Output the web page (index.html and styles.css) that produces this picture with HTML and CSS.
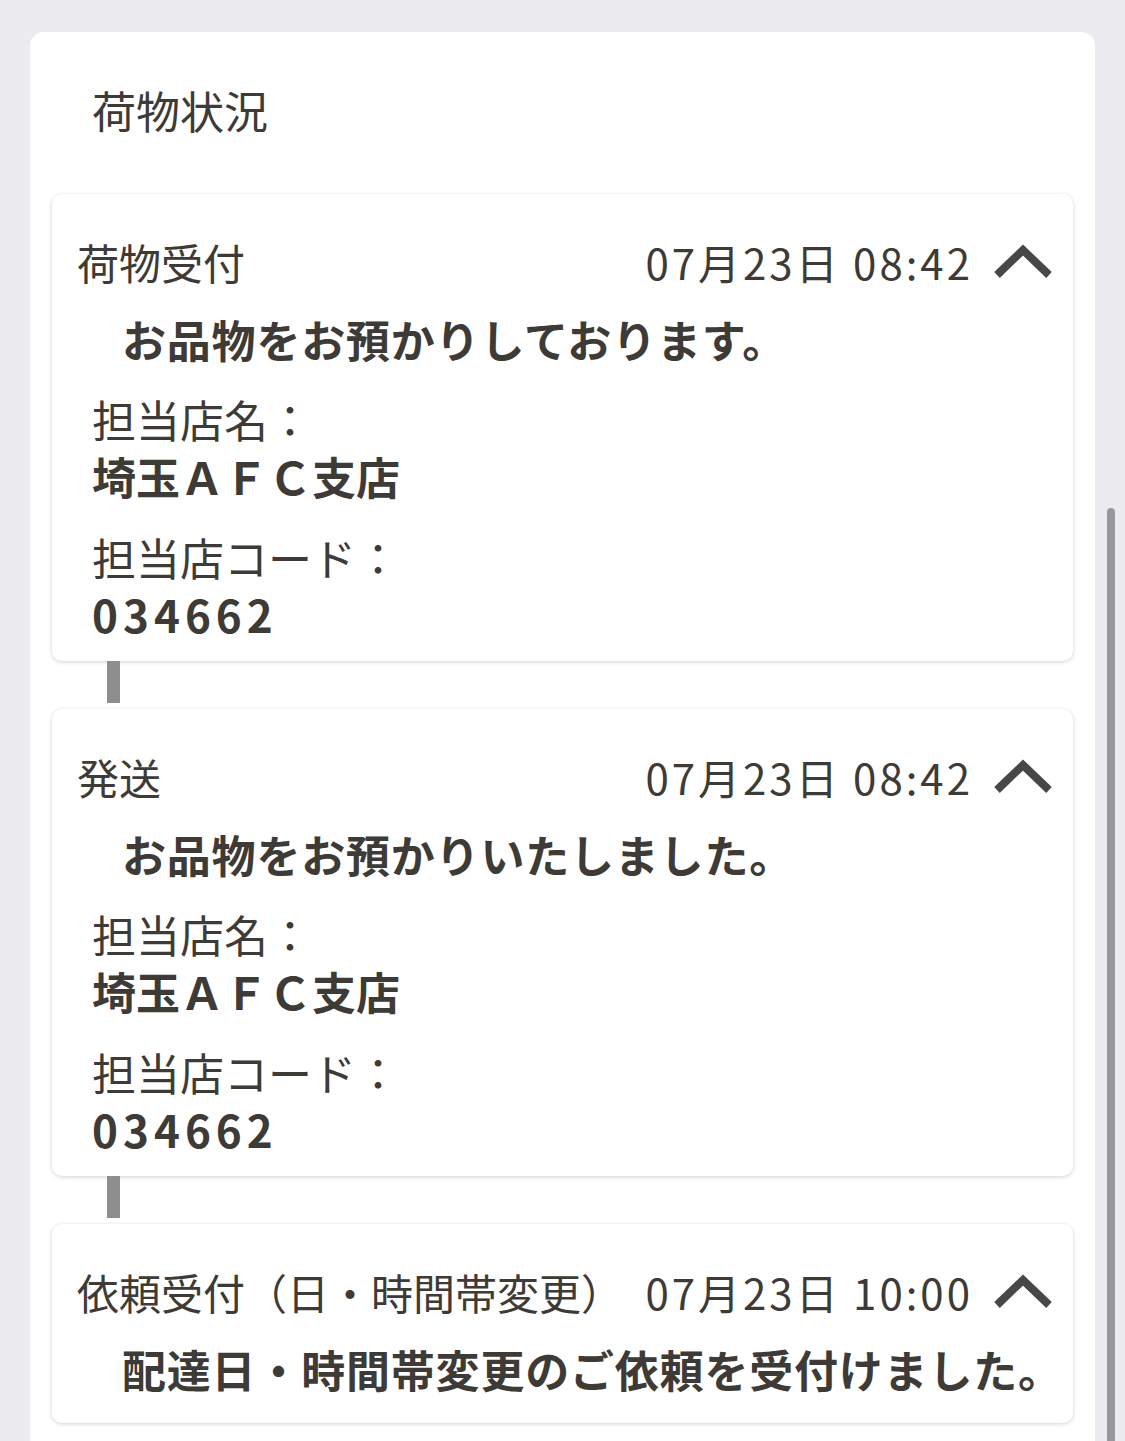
FILE: index.html
```html
<!DOCTYPE html>
<html lang="ja">
<head>
    <meta charset="UTF-8">
    <meta name="viewport" content="width=device-width, initial-scale=1.0">
    <title>荷物状況</title>
    <link rel="stylesheet" href="styles.css">
</head>
<body>
    <div class="panel">
        <h1 class="panel-title">荷物状況</h1>

        <div class="card">
            <div class="card-head">
                <span class="card-label">荷物受付</span>
                <span class="card-time">07月23日 08:42</span>
                <svg class="chevron" viewBox="0 0 60 40" width="60" height="40">
                    <polyline points="4,33 30,8 56,33" />
                </svg>
            </div>
            <p class="card-message">お品物をお預かりしております。</p>
            <div class="info">
                <div class="info-label">担当店名：</div>
                <div class="info-value">埼玉ＡＦＣ支店</div>
            </div>
            <div class="info">
                <div class="info-label">担当店コード：</div>
                <div class="info-value code">034662</div>
            </div>
        </div>

        <div class="connector"></div>

        <div class="card">
            <div class="card-head">
                <span class="card-label">発送</span>
                <span class="card-time">07月23日 08:42</span>
                <svg class="chevron" viewBox="0 0 60 40" width="60" height="40">
                    <polyline points="4,33 30,8 56,33" />
                </svg>
            </div>
            <p class="card-message">お品物をお預かりいたしました。</p>
            <div class="info">
                <div class="info-label">担当店名：</div>
                <div class="info-value">埼玉ＡＦＣ支店</div>
            </div>
            <div class="info">
                <div class="info-label">担当店コード：</div>
                <div class="info-value code">034662</div>
            </div>
        </div>

        <div class="connector"></div>

        <div class="card">
            <div class="card-head">
                <span class="card-label">依頼受付（日・時間帯変更）</span>
                <span class="card-time">07月23日 10:00</span>
                <svg class="chevron" viewBox="0 0 60 40" width="60" height="40">
                    <polyline points="4,33 30,8 56,33" />
                </svg>
            </div>
            <p class="card-message">配達日・時間帯変更のご依頼を受付けました。</p>
        </div>
    </div>

    <div class="gutter">
        <div class="scroll-thumb"></div>
    </div>
</body>
</html>
```

FILE: styles.css
```css
body {
    margin: 0;
    padding: 32px 0 0 30px;
    background-color: #ebebf0;
    font-family: "Noto Sans CJK JP", "Noto Sans", sans-serif;
    color: #3e3a35;
    display: flex;
    height: 1441px;
    box-sizing: border-box;
    overflow: hidden;
}

.panel {
    flex: 0 0 1065px;
    width: 1065px;
    min-width: 0;
    background: white;
    border-radius: 14px 14px 0 0;
    padding: 50px 22px 40px;
    box-sizing: border-box;
}

.panel-title {
    margin: 0 0 56px 40px;
    font-size: 44px;
    font-weight: normal;
    line-height: 56px;
}

.card {
    background: white;
    border-radius: 10px;
    box-shadow: 0 1px 4px rgba(0, 0, 0, 0.18);
    padding: 40px 20px 18px 25px;
}

.card-head {
    display: flex;
    align-items: center;
    height: 56px;
}

.card-label {
    flex: 1;
    font-size: 42px;
    line-height: 56px;
    white-space: nowrap;
}

.card-time {
    font-size: 42px;
    line-height: 56px;
    letter-spacing: 3px;
    margin-right: 20px;
    white-space: nowrap;
}

.chevron {
    display: block;
}

.chevron polyline {
    fill: none;
    stroke: #474747;
    stroke-width: 8;
}

.card-message {
    margin: 21px 0 8px 45px;
    font-size: 44px;
    font-weight: bold;
    line-height: 56px;
    letter-spacing: 0.8px;
    white-space: nowrap;
}

.info {
    margin: 24px 0 0 15px;
    font-size: 44px;
    line-height: 57px;
}

.info + .info {
    margin-top: 24px;
}

.info-value {
    font-weight: bold;
}

.info-value.code {
    letter-spacing: 5px;
}

.connector {
    width: 13px;
    height: 42px;
    margin: 0 0 6px 55px;
    background: #8e8e8e;
}

.gutter {
    flex: 0 0 30px;
}

.scroll-thumb {
    width: 8px;
    height: 1000px;
    margin: 476px 0 0 12px;
    border-radius: 4px;
    background: #98979d;
}
```
